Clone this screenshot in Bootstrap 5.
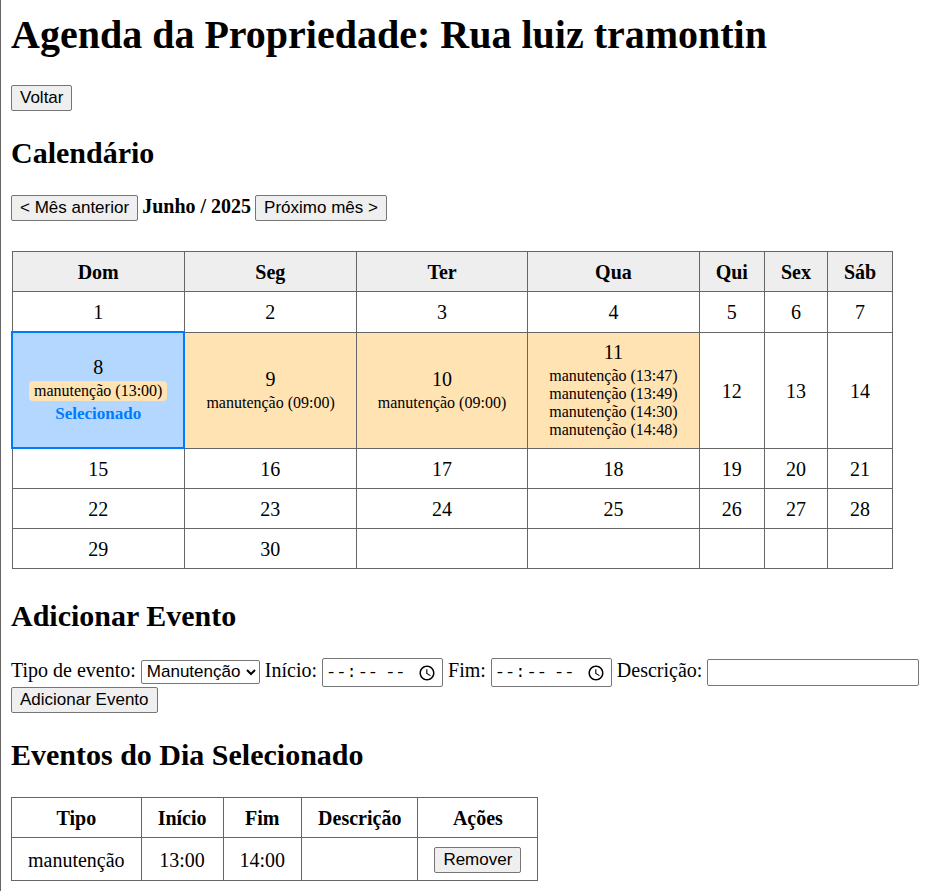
<!DOCTYPE html>
<html lang="pt-BR">
<head>
<meta charset="utf-8">
<meta name="viewport" content="width=device-width, initial-scale=1">
<title>Agenda da Propriedade</title>
<link href="https://cdn.jsdelivr.net/npm/bootstrap@5.3.0/dist/css/bootstrap.min.css" rel="stylesheet">
<style>
  body { font-family: "Liberation Serif", "Times New Roman", serif; font-size: 20px; line-height: 23px; color: #000; background: #fff; }
  main { padding: 12px 10px 10px; border-left: 1px solid #666; }
  h1 { font-size: 40px; line-height: 46px; margin-bottom: 27px; }
  h2 { font-size: 30px; line-height: 34px; margin-bottom: 25px; }
  .sheet-gap { column-gap: 5px; }
  .month-gap { column-gap: 4px; }
  .section-gap { margin-bottom: 25px; }
  .calendar-gap { margin-bottom: 30px; }
  .plain-btn, .plain-field { font-family: "Liberation Sans", Arial, sans-serif; font-size: 17px; color: #000; border: 1px solid #767676; border-radius: 2px; }
  .plain-btn { background: #efefef; line-height: 20px; padding: 2px 8px; }
  .plain-btn:hover { background: #e5e5e5; }
  .plain-field { background: #fff; padding: 1px 3px; }
  .time-field { font-family: "Liberation Mono", monospace; height: 29px; width: 121px; }
  .time-field::-webkit-calendar-picker-indicator { width: 18px; height: 18px; }
  .type-field { height: 24px; width: 119px; padding: 0 1px; }
  .text-field { height: 27px; width: 212px; }
  .agenda-grid th, .agenda-grid td { border: 1px solid #666; padding: 9px 16px 7px; }
  .agenda-grid thead.shaded th { background: #eee; }
  .agenda-grid td.busy, .agenda-grid td.chosen { padding: 8px 16px; }
  .agenda-grid td.busy { background: #ffe3b3; }
  .agenda-grid td.chosen { background: #b3d7ff; border: 2px solid #007bff; }
  .slot-list { background: #ffe3b3; border-radius: 4px; font-size: 16px; line-height: 18px; padding: 1px 5px; margin-top: 2px; }
  .chosen-note { color: #007bff; font-size: 17px; line-height: 20px; margin-top: 3px; }
</style>
<script src="https://cdn.jsdelivr.net/npm/bootstrap@5.3.0/dist/js/bootstrap.bundle.min.js"></script>
</head>
<body>
<main class="min-vh-100">
  <h1 class="fw-bold">Agenda da Propriedade: Rua luiz tramontin</h1>
  <div class="d-flex section-gap"><button type="button" class="plain-btn">Voltar</button></div>

  <h2 class="fw-bold">Calendário</h2>
  <div class="d-flex flex-wrap align-items-baseline month-gap calendar-gap">
    <button type="button" class="plain-btn">&lt; Mês anterior</button>
    <strong>Junho / 2025</strong>
    <button type="button" class="plain-btn">Próximo mês &gt;</button>
  </div>

  <table class="agenda-grid text-center align-middle calendar-gap">
    <thead class="shaded">
      <tr><th scope="col">Dom</th><th scope="col">Seg</th><th scope="col">Ter</th><th scope="col">Qua</th><th scope="col">Qui</th><th scope="col">Sex</th><th scope="col">Sáb</th></tr>
    </thead>
    <tbody>
      <tr><td>1</td><td>2</td><td>3</td><td>4</td><td>5</td><td>6</td><td>7</td></tr>
      <tr>
        <td class="chosen">8<div class="slot-list">manutenção (13:00)</div><div class="chosen-note fw-bold">Selecionado</div></td>
        <td class="busy">9<div class="slot-list">manutenção (09:00)</div></td>
        <td class="busy">10<div class="slot-list">manutenção (09:00)</div></td>
        <td class="busy">11<div class="slot-list">manutenção (13:47)<br>manutenção (13:49)<br>manutenção (14:30)<br>manutenção (14:48)</div></td>
        <td>12</td><td>13</td><td>14</td>
      </tr>
      <tr><td>15</td><td>16</td><td>17</td><td>18</td><td>19</td><td>20</td><td>21</td></tr>
      <tr><td>22</td><td>23</td><td>24</td><td>25</td><td>26</td><td>27</td><td>28</td></tr>
      <tr><td>29</td><td>30</td><td></td><td></td><td></td><td></td><td></td></tr>
    </tbody>
  </table>

  <h2 class="fw-bold">Adicionar Evento</h2>
  <form class="d-flex flex-wrap align-items-baseline sheet-gap section-gap">
    <label for="tipo">Tipo de evento:</label>
    <select id="tipo" class="plain-field type-field"><option>Manutenção</option></select>
    <label for="inicio">Início:</label>
    <input id="inicio" type="time" class="plain-field time-field">
    <label for="fim">Fim:</label>
    <input id="fim" type="time" class="plain-field time-field">
    <label for="descricao">Descrição:</label>
    <input id="descricao" type="text" class="plain-field text-field">
    <button type="button" class="plain-btn">Adicionar Evento</button>
  </form>

  <h2 class="fw-bold">Eventos do Dia Selecionado</h2>
  <table class="agenda-grid text-center align-middle">
    <thead>
      <tr><th scope="col">Tipo</th><th scope="col">Início</th><th scope="col">Fim</th><th scope="col">Descrição</th><th scope="col">Ações</th></tr>
    </thead>
    <tbody>
      <tr><td>manutenção</td><td>13:00</td><td>14:00</td><td></td><td><button type="button" class="plain-btn d-block">Remover</button></td></tr>
    </tbody>
  </table>
</main>
</body>
</html>
